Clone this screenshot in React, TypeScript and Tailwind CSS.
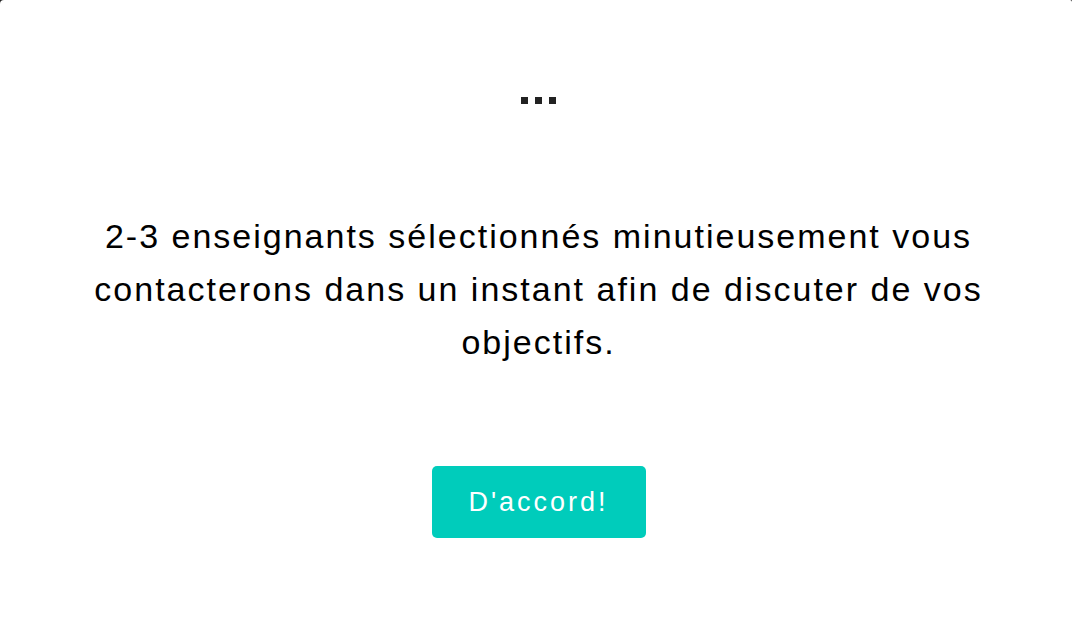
export default function App() {
  return (
    <div className="h-[620px] w-[1072px] bg-[#222] overflow-hidden">
      <div
        className="flex h-full w-full flex-col items-center rounded-tl-[4px] rounded-tr-[2px] bg-white pl-[5px]"
        style={{ fontFamily: '"Liberation Sans", Arial, sans-serif' }}
      >
        {/* Loading dots */}
        <div className="mt-[97px] flex gap-[7px]">
          <span className="h-[7px] w-[7px] bg-[#222]" />
          <span className="h-[7px] w-[7px] bg-[#222]" />
          <span className="h-[7px] w-[7px] bg-[#222]" />
        </div>

        {/* Message */}
        <p className="mt-[106px] w-[920px] text-center text-[34px] leading-[53px] tracking-[2px] text-black">
          2-3 enseignants sélectionnés minutieusement vous contacterons dans un instant afin de
          discuter de vos objectifs.
        </p>

        {/* Confirm button */}
        <button className="mt-[97px] h-[72px] w-[214px] rounded-[5px] bg-[#00ccbb] text-[27px] tracking-[3px] text-white">
          D'accord!
        </button>
      </div>
    </div>
  );
}
